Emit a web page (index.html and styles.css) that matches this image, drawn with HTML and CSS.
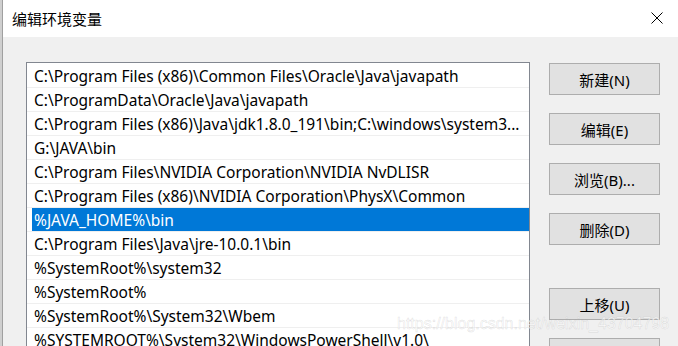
FILE: index.html
```html
<!DOCTYPE html>
<html lang="zh-CN">
<head>
    <meta charset="UTF-8">
    <title>编辑环境变量</title>
    <link rel="stylesheet" href="styles.css">
</head>
<body>
    <div class="page">
        <div class="behind"></div>
        <div class="dialog">
            <div class="titlebar">
                <span class="title">编辑环境变量</span>
                <svg class="close" width="12" height="12" viewBox="0 0 12 12">
                    <path d="M0.5 0.5 L11.5 11.5 M11.5 0.5 L0.5 11.5" stroke="#000" stroke-width="1" fill="none"/>
                </svg>
            </div>
            <div class="content">
                <div class="list">
                    <div class="row"><div class="cell">C:\Program Files (x86)\Common Files\Oracle\Java\javapath</div></div>
                    <div class="row"><div class="cell">C:\ProgramData\Oracle\Java\javapath</div></div>
                    <div class="row"><div class="cell">C:\Program Files (x86)\Java\jdk1.8.0_191\bin;C:\windows\system3...</div></div>
                    <div class="row"><div class="cell">G:\JAVA\bin</div></div>
                    <div class="row"><div class="cell">C:\Program Files\NVIDIA Corporation\NVIDIA NvDLISR</div></div>
                    <div class="row"><div class="cell">C:\Program Files (x86)\NVIDIA Corporation\PhysX\Common</div></div>
                    <div class="row selected"><div class="cell">%JAVA_HOME%\bin</div></div>
                    <div class="row"><div class="cell">C:\Program Files\Java\jre-10.0.1\bin</div></div>
                    <div class="row"><div class="cell">%SystemRoot%\system32</div></div>
                    <div class="row"><div class="cell">%SystemRoot%</div></div>
                    <div class="row"><div class="cell">%SystemRoot%\System32\Wbem</div></div>
                    <div class="row"><div class="cell">%SYSTEMROOT%\System32\WindowsPowerShell\v1.0\</div></div>
                </div>
                <div class="buttons">
                    <button>新建(N)</button>
                    <button>编辑(E)</button>
                    <button>浏览(B)...</button>
                    <button>删除(D)</button>
                    <button class="spaced">上移(U)</button>
                    <button>下移(O)</button>
                </div>
            </div>
        </div>
        <div class="watermark">https://blog.csdn.net/weixin_43704798</div>
    </div>
</body>
</html>
```

FILE: styles.css
```css
html, body {
    margin: 0;
    height: 100%;
    overflow: hidden;
}

body {
    font-family: "Noto Sans", "Noto Sans CJK SC", sans-serif;
    font-size: 15px;
    color: #000;
    background: #f0f0f0;
}

.page {
    position: relative;
    display: flex;
    height: 346px;
    overflow: hidden;
}

.behind {
    width: 2px;
    flex-shrink: 0;
    background: #cfcfcf;
    border-right: 1px solid #a0a0a0;
}

.dialog {
    flex: 1;
    display: flex;
    flex-direction: column;
}

.titlebar {
    height: 37px;
    flex-shrink: 0;
    background: #fff;
    display: flex;
    align-items: center;
    justify-content: space-between;
    padding: 0 15px 0 9px;
}

.title {
    font-size: 15px;
    margin-top: -1px;
}

.close {
    margin-top: -2px;
}

.content {
    flex-shrink: 0;
    display: flex;
    align-items: flex-start;
    padding: 25px 0 0 23px;
    gap: 19px;
}

.list {
    width: 502px;
    height: 300px;
    background: #fff;
    border: 1px solid #828790;
    padding-top: 1px;
    overflow: hidden;
}

.row {
    height: 23px;
    border-bottom: 1px solid #efefef;
    padding-left: 5px;
}

.cell {
    height: 23px;
    line-height: 24px;
    padding-left: 2px;
    font-size: 15.5px;
    white-space: nowrap;
}

.row.selected .cell {
    background: #0078d7;
    color: #fff;
}

.buttons {
    display: flex;
    flex-direction: column;
    gap: 18px;
    padding-top: 1px;
}

button {
    width: 111px;
    height: 32px;
    flex-shrink: 0;
    background: #e1e1e1;
    border: 1px solid #adadad;
    font-family: inherit;
    font-size: 15px;
    color: #000;
    padding: 0;
}

button.spaced {
    margin-top: 25px;
}

.watermark {
    position: absolute;
    left: 397px;
    top: 315px;
    font-family: "Liberation Sans", sans-serif;
    font-size: 16px;
    color: rgba(255, 255, 255, 0.7);
    -webkit-text-stroke: 0.5px rgba(150, 150, 150, 0.3);
}
```
